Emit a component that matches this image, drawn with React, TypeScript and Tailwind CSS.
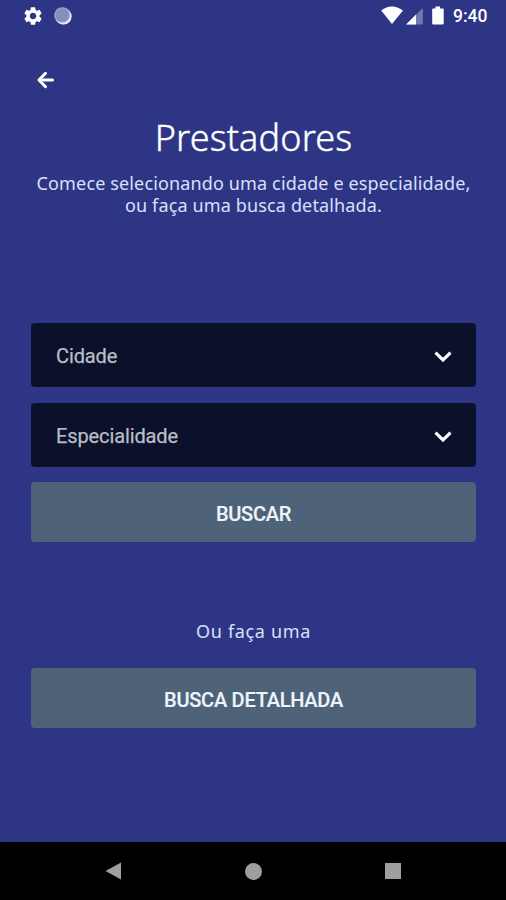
import React from "react";
import { MdSettings } from "react-icons/md";

function StatusBar() {
  return (
    <header className="flex h-8 items-center justify-between pl-[22px] pr-[18px]">
      <div className="flex items-center gap-[10px] pb-px">
        <MdSettings className="h-[22px] w-[22px]" />
        <svg className="h-[18px] w-[18px]" viewBox="0 0 18 18">
          <circle cx="9" cy="9" r="8.6" fill="#8589bd" />
          <circle cx="9.6" cy="9.6" r="8" fill="#e8eaf6" />
          <circle cx="8.2" cy="8" r="7.8" fill="#a0a3cc" />
          <circle cx="8.2" cy="8" r="6.6" fill="#888cbe" />
        </svg>
      </div>
      <div className="flex items-center">
        <svg className="h-[22px] w-[72px]" viewBox="0 0 72 22">
          <path d="M0.2 5.5Q10.5 -2.5 22 5.5L11 19Z" fill="white" />
          <path d="M41.8 3V19.5H25Z" fill="#7378b0" />
          <path d="M35 9.6V19.5H25Z" fill="white" />
          <path d="M54.5 1.5h4.5v2h2.7q1 0 1 1v14q0 1-1 1h-9.5q-1 0-1-1V4.5q0-1 1-1H54.5Z" fill="white" />
        </svg>
        <span className="mt-px w-[35px] text-[17.5px] leading-none font-medium whitespace-nowrap">9:40</span>
      </div>
    </header>
  );
}

function SelectField({ label }: { label: string }) {
  return (
    <button className="flex h-16 w-full items-center justify-between rounded-[4px] bg-[#0b102b] pr-[24px] pl-[25px] text-left">
      <span className="pt-[2px] text-[20px] leading-none tracking-[-0.12px] text-[#bbbdc5] [-webkit-text-stroke:0.25px_#bbbdc5]">{label}</span>
      <svg className="mt-[4px] h-[12px] w-[18px]" viewBox="0 0 18 12" fill="none" stroke="white" strokeWidth="3.2">
        <path d="M1.5 1.7L9 9L16.5 1.7" />
      </svg>
    </button>
  );
}

function ActionButton({ label }: { label: string }) {
  return (
    <button className="flex h-[60px] w-full items-center justify-center rounded-[4px] bg-[#4e6278] pt-[3px] text-[20px] leading-none font-medium tracking-[-0.25px] text-[#edf4fc] [-webkit-text-stroke:0.2px_#edf4fc]">
      {label}
    </button>
  );
}

export default function App() {
  return (
    <div className="flex h-[900px] w-[506px] flex-col overflow-hidden bg-[#2e3585] font-['Roboto',sans-serif] text-white">
      <StatusBar />
      <main className="flex flex-1 flex-col pr-[30px] pl-[31px]">
        <button className="mt-[39px] ml-[6px] h-[18px] w-[18px]" aria-label="Voltar">
          <svg viewBox="0 0 18 18" fill="none" stroke="white" strokeWidth="3" strokeLinecap="round" strokeLinejoin="round">
            <path d="M8.5 2.3L2 9L8.5 15.7M2 9H15.5" />
          </svg>
        </button>
        <div className="flex flex-col items-center font-['Noto_Sans',sans-serif]">
          <h1 className="mt-[29px] text-[36px] leading-[40px] font-light tracking-[0.15px] [-webkit-text-stroke:0.4px_white]">Prestadores</h1>
          <p className="mt-[14px] text-center text-[18px] leading-[22px] tracking-[0.14px] whitespace-nowrap text-[#d9e0fa]">
            Comece selecionando uma cidade e especialidade,
            <br />
            ou faça uma busca detalhada.
          </p>
        </div>
        <div className="mt-[107px] flex flex-col gap-4">
          <SelectField label="Cidade" />
          <SelectField label="Especialidade" />
        </div>
        <div className="mt-[15px] flex">
          <ActionButton label="BUSCAR" />
        </div>
        <p className="mt-[78px] text-center font-['Noto_Sans',sans-serif] text-[18px] leading-[22px] tracking-[0.65px] text-[#d9e0fa]">Ou faça uma</p>
        <div className="mt-[26px] flex">
          <ActionButton label="BUSCA DETALHADA" />
        </div>
      </main>
      <nav className="flex h-[58px] items-center justify-between bg-black pr-[105px] pl-[105px]">
        <svg className="h-[18px] w-[16px]" viewBox="0 0 16 18">
          <path d="M0.5 9L16 0.5V17.5Z" fill="#9e9e9e" />
        </svg>
        <div className="h-[17px] w-[17px] rounded-full bg-[#9e9e9e]" />
        <div className="h-[16px] w-[16px] bg-[#9e9e9e]" />
      </nav>
    </div>
  );
}
